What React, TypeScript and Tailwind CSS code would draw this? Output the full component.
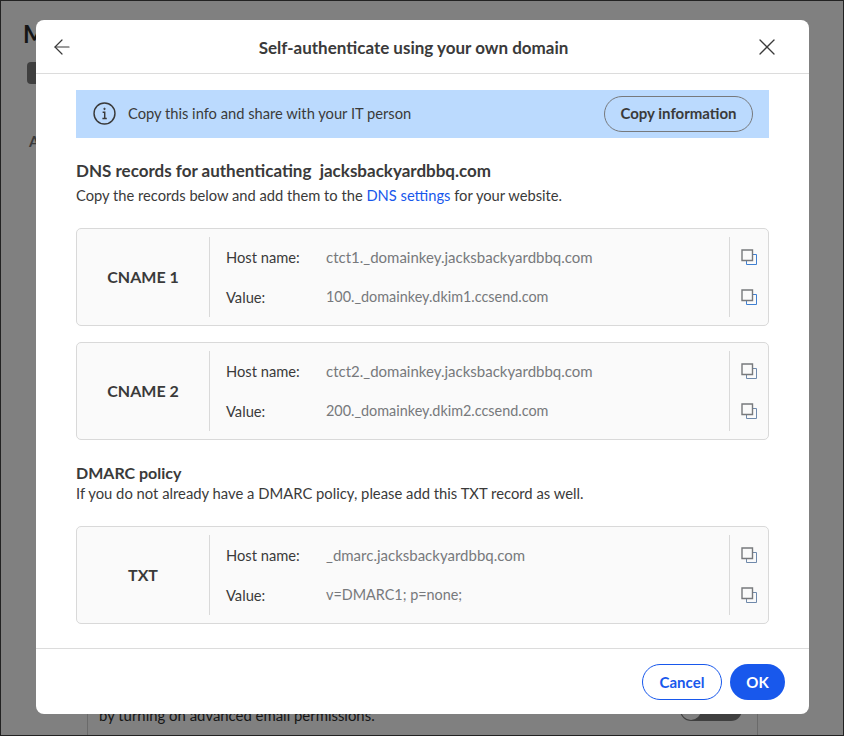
import { ArrowLeft, X } from 'lucide-react';

const FONT = "font-['Lato','Noto_Sans',sans-serif]";

const CopyIcon = ({ active }: { active?: boolean }) => (
  <svg width="17" height="17" viewBox="0 0 17 17" fill="none">
    <path d="M5.5 5.5H15.5V15.5H5.5Z" stroke={active ? '#3f7fd0' : '#6f89ab'} strokeWidth="1" />
    <path d="M1 1H11.5V11.5H1Z" fill="#fafafa" stroke="#77797c" strokeWidth="1.4" />
  </svg>
);

interface RecordCardProps {
  name: string;
  host: string;
  value: string;
  active?: boolean;
}

const RecordCard = ({ name, host, value, active }: RecordCardProps) => (
  <div className="flex h-[98px] items-stretch rounded-[5px] border border-[#d9d9d9] bg-[#fafafa] py-2">
    <div className="flex w-[133px] items-center justify-center border-r border-[#d9d9d9] text-[16px] font-bold text-[#3a3a3a]">
      {name}
    </div>
    <div className="flex flex-1 flex-col justify-center gap-[20px] pl-4">
      <div className="flex h-[20px] items-center">
        <span className="w-[100px] text-[14.7px] text-[#3a3a3a]">Host name:</span>
        <span className="text-[15px] text-[#77797c]">{host}</span>
      </div>
      <div className="flex h-[20px] items-center">
        <span className="w-[100px] text-[14.7px] text-[#3a3a3a]">Value:</span>
        <span className="text-[14.4px] text-[#77797c]">{value}</span>
      </div>
    </div>
    <div className="flex w-[39px] flex-col items-center justify-center gap-[23px] border-l border-[#d9d9d9] pl-[1px]">
      <CopyIcon active={active} />
      <CopyIcon active={active} />
    </div>
  </div>
);

export default function App() {
  return (
    <div className={`relative h-[736px] w-[844px] overflow-hidden border border-[#222] bg-[#808080] ${FONT}`}>
      {/* page behind the overlay */}
      <div className="px-[22px] pt-[15px] text-[24px] font-bold text-[#161616]">M</div>
      <div className="mx-[26px] mt-[10px] h-[22px] w-[20px] rounded-[4px] bg-[#3f3f3f]" />
      <div className="mx-[28px] mt-[46px] text-[15px] font-bold text-[#3a3a3a]">A</div>
      <div className="absolute bottom-[10px] left-[98px] text-[14.9px] leading-5 text-[#161616]">
        by turning on advanced email permissions.
      </div>
      <div className="absolute bottom-0 left-[86px] h-[30px] w-px bg-[#6a6a6a]" />
      <div className="absolute bottom-0 right-[85px] h-[30px] w-px bg-[#6a6a6a]" />
      <div className="absolute bottom-[14px] right-[101px] h-[22px] w-[62px] rounded-full bg-[#3f3f3f]">
        <div className="ml-px mt-px h-5 w-5 rounded-full bg-[#808080]" />
      </div>

      {/* modal */}
      <div className="absolute left-[35px] top-[19px] flex h-[694px] w-[773px] flex-col rounded-[8px] bg-white text-[#3a3a3a]">
        <div className="flex h-[54px] shrink-0 items-center justify-between border-b border-[#dcdcdc] pl-[14px] pr-[28px]">
          <ArrowLeft size={24} strokeWidth={1.2} />
          <h2 className="mt-[2px] text-[17px] font-bold">Self-authenticate using your own domain</h2>
          <X size={28} strokeWidth={1.1} />
        </div>

        <div className="flex-1 px-10 pt-4">
          <div className="flex h-12 items-center justify-between bg-[#bbdafe] pl-[17px] pr-4">
            <div className="flex items-center gap-[12px] pb-[1px] text-[14.7px]">
              <svg width="23" height="23" viewBox="0 0 22 22" fill="none" stroke="#3a3a3a">
                <circle cx="11" cy="11" r="10" strokeWidth="1.4" />
                <path d="M9.2 9.8H11.2V15.5M9 15.7H13.2" strokeWidth="1.4" />
                <circle cx="11" cy="6.6" r="0.7" fill="#3a3a3a" strokeWidth="0.8" />
              </svg>
              <span className="pb-[1px]">Copy this info and share with your IT person</span>
            </div>
            <button className="h-9 w-[149px] rounded-full border border-[#77797c] pb-[1px] text-[15px] font-bold">
              Copy information
            </button>
          </div>

          <h3 className="mt-[23px] text-[17px] font-bold leading-5">DNS records for authenticating&nbsp; jacksbackyardbbq.com</h3>
          <p className="mt-[4px] text-[14.7px] leading-5">
            Copy the records below and add them to the <span className="text-[#1858ec]">DNS settings</span> for your website.
          </p>

          <div className="mt-[23px] flex flex-col gap-4">
            <RecordCard name="CNAME 1" host="ctct1._domainkey.jacksbackyardbbq.com" value="100._domainkey.dkim1.ccsend.com" active />
            <RecordCard name="CNAME 2" host="ctct2._domainkey.jacksbackyardbbq.com" value="200._domainkey.dkim2.ccsend.com" />
          </div>

          <h3 className="mt-[23px] text-[16px] font-bold leading-5">DMARC policy</h3>
          <p className="text-[14.8px] leading-5">If you do not already have a DMARC policy, please add this TXT record as well.</p>

          <div className="mt-[23px]">
            <RecordCard name="TXT" host="_dmarc.jacksbackyardbbq.com" value="v=DMARC1; p=none;" />
          </div>
        </div>

        <div className="flex h-[66px] shrink-0 items-start justify-end gap-2 border-t border-[#dcdcdc] pr-6 pt-[15px]">
          <button className="h-9 w-20 rounded-full border border-[#1858ec] text-[15px] font-bold text-[#1858ec]">Cancel</button>
          <button className="h-9 w-[55px] rounded-full bg-[#1858ec] text-[15px] font-bold text-white">OK</button>
        </div>
      </div>
    </div>
  );
}
